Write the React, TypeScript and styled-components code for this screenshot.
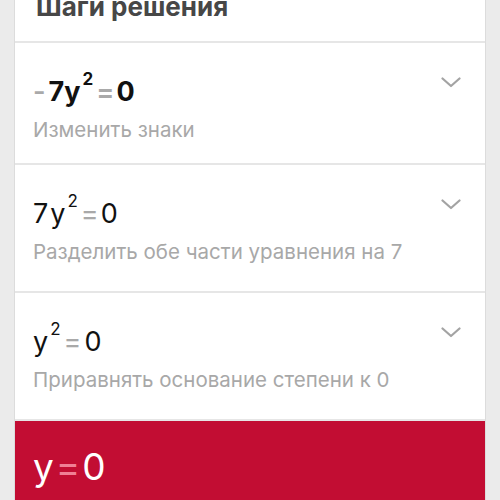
import React from 'react'
import styled, { createGlobalStyle } from 'styled-components'

const GlobalStyle = createGlobalStyle`
  html, body {
    margin: 0;
    padding: 0;
    background: #ebebeb;
  }
  body {
    font-family: 'Inter', 'Liberation Sans', sans-serif;
    -webkit-font-smoothing: antialiased;
  }
`

type Step = {
  formula: React.ReactNode
  hint: string
  first?: boolean
}

function Chevron() {
  return (
    <svg width="20" height="11" viewBox="0 0 20 11" fill="none">
      <polyline
        points="1.5,1.5 10,9 18.5,1.5"
        stroke="#a3a3a3"
        strokeWidth="2.2"
        strokeLinecap="round"
        strokeLinejoin="round"
      />
    </svg>
  )
}

function App() {
  const steps: Step[] = [
    {
      first: true,
      formula: (
        <Formula $bold>
          <Sign $gap={3} $heavy>-</Sign>
          7y<Sup $bold>2</Sup>
          <Sign $gap={2} $left={3} $heavy>=</Sign>0
        </Formula>
      ),
      hint: 'Изменить знаки',
    },
    {
      formula: (
        <Formula>
          7<Gap $w={2} />y<Sup>2</Sup>
          <Sign $gap={2} $left={3}>=</Sign>0
        </Formula>
      ),
      hint: 'Разделить обе части уравнения на 7',
    },
    {
      formula: (
        <Formula>
          y<Sup>2</Sup>
          <Sign $gap={3} $left={3}>=</Sign>0
        </Formula>
      ),
      hint: 'Приравнять основание степени к 0',
    },
  ]

  return (
    <Page>
      <GlobalStyle />
      <Panel>
        <Header>
          <Title>Шаги решения</Title>
        </Header>
        {steps.map((s, i) => (
          <StepRow key={i} $first={s.first}>
            <StepBody>
              {s.formula}
              <Hint>{s.hint}</Hint>
            </StepBody>
            <ChevronBox>
              <Chevron />
            </ChevronBox>
          </StepRow>
        ))}
        <Answer>
          <AnswerFormula>
            y<AnswerSign>=</AnswerSign>0
          </AnswerFormula>
        </Answer>
      </Panel>
    </Page>
  )
}

export default App

const Page = styled.div`
  height: 500px;
  overflow: hidden;
  padding: 0 14px;
  background: #ebebeb;
`

const Panel = styled.div`
  background: #fff;
  border-left: 1px solid #dcdcdc;
  border-right: 1px solid #dcdcdc;
  height: 500px;
`

const Header = styled.div`
  height: 41px;
  border-bottom: 2px solid #e6e6e6;
  padding-left: 21px;
  overflow: hidden;
`

const Title = styled.div`
  margin-top: -7px;
  font-size: 26px;
  line-height: 28px;
  font-weight: 700;
  color: #474747;
`

const StepRow = styled.div<{ $first?: boolean }>`
  height: ${(p) => (p.$first ? 120 : 126)}px;
  border-bottom: 2px solid #e6e6e6;
  display: flex;
  justify-content: space-between;
  padding-left: 18px;
  padding-right: 24px;
`

const StepBody = styled.div`
  padding-top: 35px;
`

const Formula = styled.div<{ $bold?: boolean }>`
  font-size: 27px;
  line-height: 28px;
  height: 28px;
  font-weight: ${(p) => (p.$bold ? 700 : 400)};
  color: #111;
  white-space: nowrap;
`

const Sign = styled.span<{ $gap: number; $left?: number; $heavy?: boolean }>`
  color: #a9a9a9;
  font-weight: ${(p) => (p.$heavy ? 600 : 400)};
  margin-left: ${(p) => p.$left ?? 0}px;
  margin-right: ${(p) => p.$gap}px;
`

const Gap = styled.span<{ $w: number }>`
  display: inline-block;
  width: ${(p) => p.$w}px;
`

const Sup = styled.span<{ $bold?: boolean }>`
  font-size: 17px;
  font-weight: ${(p) => (p.$bold ? 700 : 400)};
  vertical-align: 16px;
  line-height: 0;
  margin-left: 2px;
`

const Hint = styled.div`
  margin-top: 12px;
  font-size: 20.5px;
  line-height: 24px;
  color: #a8a8a8;
  white-space: nowrap;
`

const ChevronBox = styled.div`
  padding-top: 29px;
`

const Answer = styled.div`
  background: #c20d33;
  height: 80px;
  padding-left: 18px;
  padding-top: 26px;
  box-sizing: border-box;
`

const AnswerFormula = styled.div`
  font-size: 37px;
  line-height: 40px;
  color: #fff;
  white-space: nowrap;
`

const AnswerSign = styled.span`
  color: #f07f96;
  margin: 0 2px;
`
